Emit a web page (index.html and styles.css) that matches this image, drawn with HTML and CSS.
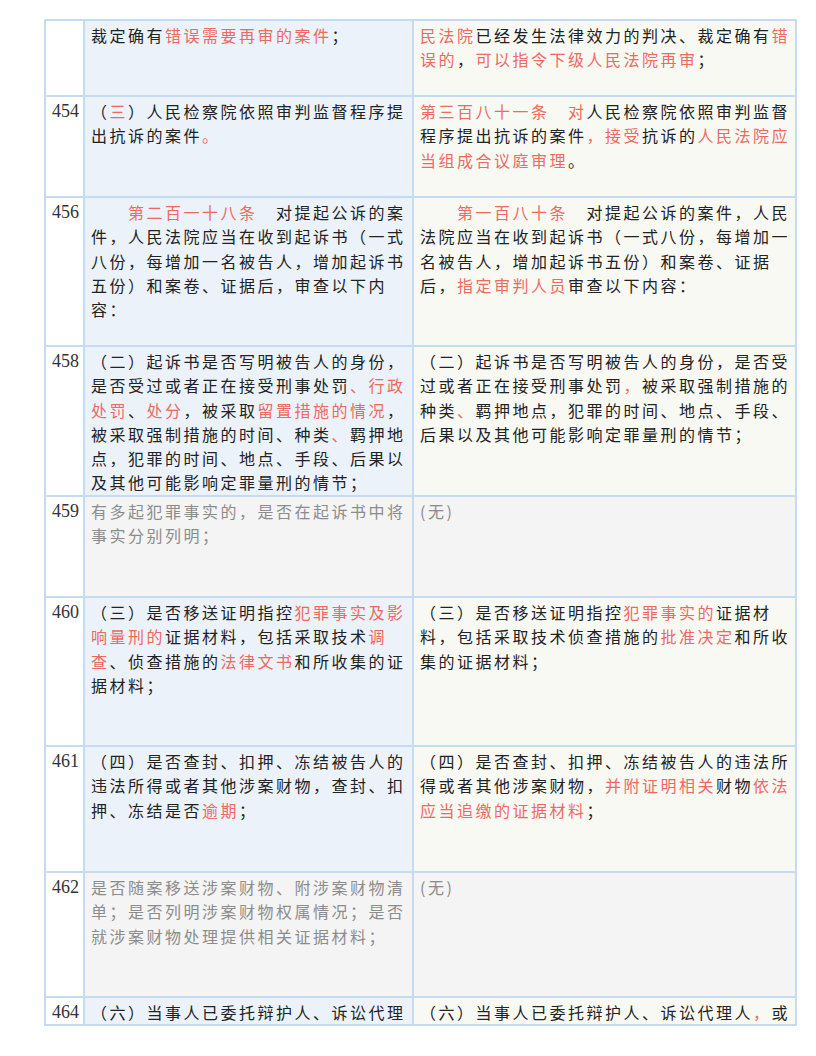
FILE: index.html
```html
<!DOCTYPE html>
<html lang="zh-CN">
<head>
<meta charset="utf-8">
<title>刑事诉讼法解释对照</title>
<link rel="stylesheet" href="styles.css">
</head>
<body>
<table class="cmp">
  <colgroup><col class="c-num"><col class="c-old"><col class="c-new"></colgroup>
  <tr class="h76">
    <td class="num"></td>
    <td class="old">裁定确有<span class="hl">错误需要再审的案件</span>；</td>
    <td class="new"><span class="hl">民法院</span>已经发生法律效力的判决、裁定确有<span class="hl">错误的</span>，<span class="hl">可以指令下级人民法院再审</span>；</td>
  </tr>
  <tr class="h101">
    <td class="num">454</td>
    <td class="old">（<span class="hl">三</span>）人民检察院依照审判监督程序提出抗诉的案件<span class="hl">。</span></td>
    <td class="new"><span class="hl">第三百八十一条　对</span>人民检察院依照审判监督程序提出抗诉的案件<span class="hl">，接受</span>抗诉的<span class="hl">人民法院应当组成合议庭审理</span>。</td>
  </tr>
  <tr class="h149">
    <td class="num">456</td>
    <td class="old">　　<span class="hl">第二百一十八条</span>　对提起公诉的案件，人民法院应当在收到起诉书（一式八份，每增加一名被告人，增加起诉书五份）和案卷、证据后，审查以下内容：</td>
    <td class="new">　　<span class="hl">第一百八十条</span>　对提起公诉的案件，人民法院应当在收到起诉书（一式八份，每增加一名被告人，增加起诉书五份）和案卷、证据后，<span class="hl">指定审判人员</span>审查以下内容：</td>
  </tr>
  <tr class="h150">
    <td class="num">458</td>
    <td class="old">（二）起诉书是否写明被告人的身份，是否受过或者正在接受刑事处罚<span class="hl">、行政处罚</span>、<span class="hl">处分</span>，被采取<span class="hl">留置措施的情况</span>，被采取强制措施的时间、种类<span class="hl">、</span>羁押地点，犯罪的时间、地点、手段、后果以及其他可能影响定罪量刑的情节；</td>
    <td class="new">（二）起诉书是否写明被告人的身份，是否受过或者正在接受刑事处罚<span class="hl">，</span>被采取强制措施的种类<span class="hl">、</span>羁押地点，犯罪的时间、地点、手段、后果以及其他可能影响定罪量刑的情节；</td>
  </tr>
  <tr class="h101 none">
    <td class="num">459</td>
    <td class="old">有多起犯罪事实的，是否在起诉书中将事实分别列明；</td>
    <td class="new">(无)</td>
  </tr>
  <tr class="h149">
    <td class="num">460</td>
    <td class="old">（三）是否移送证明指控<span class="hl">犯罪事实及影响量刑的</span>证据材料，包括采取技术<span class="hl">调查</span>、侦查措施的<span class="hl">法律文书</span>和所收集的证据材料；</td>
    <td class="new">（三）是否移送证明指控<span class="hl">犯罪事实的</span>证据材料，包括采取技术侦查措施的<span class="hl">批准决定</span>和所收集的证据材料；</td>
  </tr>
  <tr class="h126">
    <td class="num">461</td>
    <td class="old">（四）是否查封、扣押、冻结被告人的违法所得或者其他涉案财物，查封、扣押、冻结是否<span class="hl">逾期</span>；</td>
    <td class="new">（四）是否查封、扣押、冻结被告人的违法所得或者其他涉案财物，<span class="hl">并附证明相关</span>财物<span class="hl">依法应当追缴的证据材料</span>；</td>
  </tr>
  <tr class="h125 none">
    <td class="num">462</td>
    <td class="old">是否随案移送涉案财物、附涉案财物清单；是否列明涉案财物权属情况；是否就涉案财物处理提供相关证据材料；</td>
    <td class="new">(无)</td>
  </tr>
  <tr class="h27">
    <td class="num">464</td>
    <td class="old">（六）当事人已委托辩护人、诉讼代理</td>
    <td class="new">（六）当事人已委托辩护人、诉讼代理人<span class="hl">，</span>或</td>
  </tr>
</table>
</body>
</html>
```

FILE: styles.css
```css
html, body {
  margin: 0;
  padding: 0;
  background: #ffffff;
}

.cmp {
  border-collapse: collapse;
  table-layout: fixed;
  width: 751px;
  margin: 19px 0 0 44px;
  font-family: "Noto Sans CJK SC", "Noto Sans CJK JP", sans-serif;
  font-size: 16px;
  line-height: 24.3px;
  color: #222222;
  letter-spacing: 2.5px;
}

.c-num { width: 39px; }
.c-old { width: 329px; }
.c-new { width: 383px; }

.cmp td {
  border: 2px solid #c4dbf1;
  vertical-align: top;
  padding: 2px 2px 0 6px;
  overflow: hidden;
}

.cmp td.num {
  background: #ffffff;
  font-family: "Liberation Serif", serif;
  font-size: 18px;
  letter-spacing: 0;
  color: #333333;
  text-align: right;
  padding: 2px 4px 0 0;
}

.cmp td.old { background: #ebf2fa; }
.cmp td.new { background: #f9f9f4; }

.cmp tr.none td.old,
.cmp tr.none td.new {
  background: #f4f4f4;
  color: #8c8c8c;
}

.hl { color: #ec6a62; }

.h76 { height: 76px; }
.h101 { height: 101px; }
.h149 { height: 149px; }
.h150 { height: 150px; }
.h126 { height: 126px; }
.h125 { height: 125px; }
.h27 { height: 27px; }
```
